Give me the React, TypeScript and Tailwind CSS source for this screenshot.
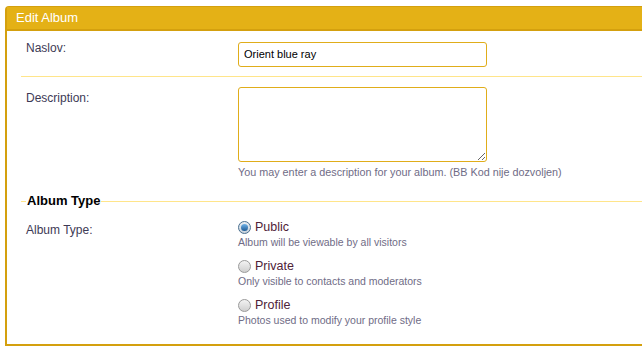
import React, { useState } from 'react';

const options = [
  { id: 'public', label: 'Public', hint: 'Album will be viewable by all visitors' },
  { id: 'private', label: 'Private', hint: 'Only visible to contacts and moderators' },
  { id: 'profile', label: 'Profile', hint: 'Photos used to modify your profile style' },
];

export default function App() {
  const [title, setTitle] = useState('Orient blue ray');
  const [type, setType] = useState('public');

  return (
    <div className="w-[642px] h-[350px] overflow-hidden bg-white pt-[6px] pl-[5px] font-['Liberation_Sans',Arial,sans-serif]">
      <div className="w-[700px] h-[340px] border-l-2 border-b-2 border-t border-[#d4a00e] rounded-tl-[4px] flex flex-col">
        <div className="h-[24px] bg-[#e4b116] border-b-2 border-[#d4a00e] pl-[9px] flex items-center text-[13px] text-white">
          Edit Album
        </div>

        <div className="pl-[14px]">
          <div className="flex border-b border-[#ffe58a] h-[46px]">
            <div className="w-[217px] pl-[5px] pt-[8px] text-[12px] text-[#3d3a55]">Naslov:</div>
            <div className="pt-[10px]">
              <input
                value={title}
                onChange={(e) => setTitle(e.target.value)}
                className="w-[249px] h-[25px] border border-[#e0ad1a] rounded-[3px] px-[5px] text-[11px] text-black outline-none"
              />
            </div>
          </div>

          <div className="flex h-[116px]">
            <div className="w-[217px] pl-[5px] pt-[12px] text-[12px] text-[#3d3a55]">Description:</div>
            <div className="pt-[10px] flex flex-col">
              <textarea className="w-[249px] h-[75px] border border-[#e0ad1a] rounded-[3px] outline-none block" />
              <div className="mt-[2px] text-[10.8px] text-[#6f6c86] whitespace-nowrap">
                You may enter a description for your album. (BB Kod nije dozvoljen)
              </div>
            </div>
          </div>

          <div className="flex items-center">
            <div className="w-[5px] border-t border-[#ffe58a]" />
            <div className="px-[1px] text-[13px] font-bold text-black leading-[16px]">Album Type</div>
            <div className="flex-1 border-t border-[#ffe58a]" />
          </div>

          <div className="flex pt-[10px]">
            <div className="w-[217px] pl-[5px] pt-[2px] text-[12px] text-[#3d3a55]">Album Type:</div>
            <div className="flex flex-col gap-[9px]">
              {options.map((o) => (
                <label key={o.id} className="flex flex-col cursor-pointer">
                  <span className="flex items-center gap-[4px] text-[12.5px] text-[#4f2238] leading-[16px]">
                    <span
                      className={`w-[13px] h-[13px] rounded-full border flex items-center justify-center ${
                        type === o.id
                          ? 'border-[#4a6f8f] bg-gradient-to-b from-[#e9eef3] to-[#c8d2dc]'
                          : 'border-[#9a9a9a] bg-gradient-to-b from-[#f3f3f3] to-[#cfcfcf]'
                      }`}
                    >
                      {type === o.id && <span className="w-[7px] h-[7px] rounded-full bg-gradient-to-b from-[#6fb2e8] to-[#1d5b95]" />}
                    </span>
                    <input type="radio" className="hidden" checked={type === o.id} onChange={() => setType(o.id)} />
                    {o.label}
                  </span>
                  <span className="text-[10.5px] text-[#6f6c86] leading-[14px]">{o.hint}</span>
                </label>
              ))}
            </div>
          </div>
        </div>
      </div>
    </div>
  );
}
